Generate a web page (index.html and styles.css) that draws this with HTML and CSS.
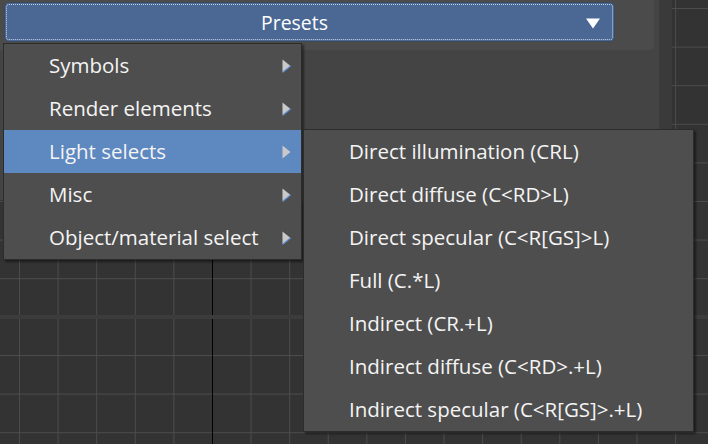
FILE: index.html
```html
<!DOCTYPE html>
<html>
<head>
<meta charset="utf-8">
<link rel="stylesheet" href="styles.css">
</head>
<body>
  <div class="viewports">
    <div class="vp vp-top">
      <div class="panel">
        <div class="cmd">
          <div class="rollout">
            <div class="presets">
              <span class="presets-label">Presets</span>
              <svg class="drop" width="14" height="11" viewBox="0 0 14 11"><path d="M0 0.5 H14 L7 10.5 Z" fill="#ffffff"/></svg>
            </div>
          </div>
        </div>
        <div class="strip"></div>
      </div>
    </div>
    <div class="vp vp-bottom"></div>
  </div>

  <div class="menu main-menu">
    <div class="item"><span>Symbols</span><svg class="arr" width="9" height="14" viewBox="0 0 9 14"><path d="M0.5 0.5 L8.5 7 L0.5 13.5 Z" fill="#c9c9c9"/><path d="M8.5 7 L0.8 13.3" stroke="#5d8fd6" stroke-width="1.2"/></svg></div>
    <div class="item"><span>Render elements</span><svg class="arr" width="9" height="14" viewBox="0 0 9 14"><path d="M0.5 0.5 L8.5 7 L0.5 13.5 Z" fill="#c9c9c9"/><path d="M8.5 7 L0.8 13.3" stroke="#5d8fd6" stroke-width="1.2"/></svg></div>
    <div class="item active"><span>Light selects</span><svg class="arr" width="9" height="14" viewBox="0 0 9 14"><path d="M0.5 0.5 L8.5 7 L0.5 13.5 Z" fill="#c9c9c9"/></svg></div>
    <div class="item"><span>Misc</span><svg class="arr" width="9" height="14" viewBox="0 0 9 14"><path d="M0.5 0.5 L8.5 7 L0.5 13.5 Z" fill="#c9c9c9"/><path d="M8.5 7 L0.8 13.3" stroke="#5d8fd6" stroke-width="1.2"/></svg></div>
    <div class="item"><span>Object/material select</span><svg class="arr" width="9" height="14" viewBox="0 0 9 14"><path d="M0.5 0.5 L8.5 7 L0.5 13.5 Z" fill="#c9c9c9"/><path d="M8.5 7 L0.8 13.3" stroke="#5d8fd6" stroke-width="1.2"/></svg></div>
  </div>

  <div class="menu sub-menu">
    <div class="item"><span>Direct illumination (CRL)</span></div>
    <div class="item"><span>Direct diffuse (C&lt;RD&gt;L)</span></div>
    <div class="item"><span>Direct specular (C&lt;R[GS]&gt;L)</span></div>
    <div class="item"><span>Full (C.*L)</span></div>
    <div class="item"><span>Indirect (CR.+L)</span></div>
    <div class="item"><span>Indirect diffuse (C&lt;RD&gt;.+L)</span></div>
    <div class="item"><span>Indirect specular (C&lt;R[GS]&gt;.+L)</span></div>
  </div>
</body>
</html>
```
FILE: styles.css
```css
html, body {
  margin: 0;
  padding: 0;
}
body {
  width: 708px;
  height: 444px;
  overflow: hidden;
  position: relative;
  font-family: "Open Sans", "Noto Sans", sans-serif;
  color: #f4f4f4;
  background: #3c3c3c;
}
.viewports {
  display: flex;
  flex-direction: column;
  gap: 4px;
  height: 444px;
}
.vp {
  background-color: #333333;
  background-image:
    linear-gradient(#000, #000),
    linear-gradient(90deg, #4c4c4c 1px, transparent 1px),
    linear-gradient(#4c4c4c 1px, transparent 1px);
  background-size: 1px 100%, 38.6px 38.6px, 38.6px 38.6px;
  background-repeat: no-repeat, repeat, repeat;
}
.vp-top {
  height: 315px;
  background-position: 212px 0, 19px 0, 0 8px;
}
.vp-bottom {
  flex: 1;
  background-position: 212px 0, 19px 0, 0 36px;
}
.panel {
  display: flex;
  width: 672px;
  height: 200px;
}
.cmd {
  width: 659px;
  background: #444444;
}
.strip {
  width: 13px;
  background: #3a3a3a;
}
.rollout {
  width: 654px;
  height: 50px;
  background: #4b4b4b;
  border-bottom-right-radius: 4px;
  padding-top: 2px;
  box-sizing: border-box;
}
.presets {
  margin-left: 4px;
  width: 611px;
  height: 40px;
  box-sizing: border-box;
  background: #4a6893;
  border: 1px solid #3d4a5c;
  border-radius: 5px;
  outline: 1px dotted #c2d3ea;
  outline-offset: -3px;
  display: flex;
  align-items: center;
  position: relative;
  padding-right: 30px;
}
.presets-label {
  flex: 1;
  text-align: center;
  font-size: 19.4px;
  color: #ffffff;
}
.drop {
  position: absolute;
  right: 14px;
  top: 15px;
}
.menu {
  position: absolute;
  background: #4e4e4e;
  border: 1px solid #2c2c2c;
  box-shadow: 2px 2px 2px rgba(0, 0, 0, 0.45);
  box-sizing: border-box;
}
.main-menu {
  left: 3px;
  top: 43px;
  width: 299px;
  height: 217px;
}
.sub-menu {
  left: 303px;
  top: 129px;
  width: 391px;
  height: 303px;
}
.item {
  height: 43px;
  display: flex;
  align-items: center;
  padding-left: 45px;
  padding-right: 10px;
  font-size: 20.5px;
  white-space: nowrap;
}
.item span {
  flex: 1;
  position: relative;
  top: -1px;
}
.item.active {
  background: #5e88c0;
}
.arr {
  display: block;
}
```
